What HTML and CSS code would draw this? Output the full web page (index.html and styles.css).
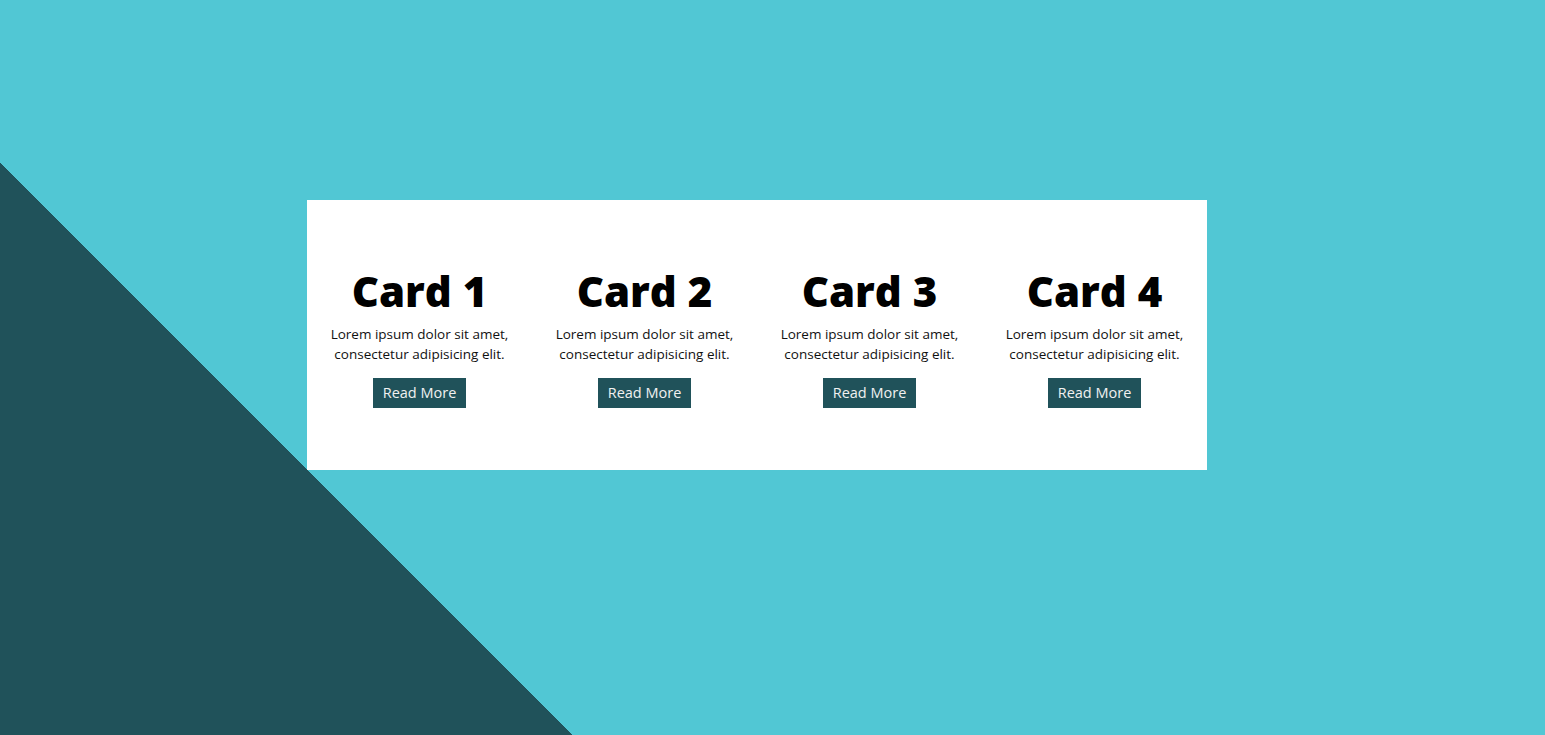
FILE: index.html
```html
<!DOCTYPE html>
<html lang="en">
<head>
<meta charset="utf-8">
<title>Cards</title>
<link rel="stylesheet" href="styles.css">
</head>
<body>
  <main class="stage">
    <section class="cards">
      <article class="card">
        <h2 class="card-title">Card 1</h2>
        <p class="card-text">Lorem ipsum dolor sit amet, consectetur adipisicing elit.</p>
        <a class="card-btn" href="#">Read More</a>
      </article>
      <article class="card">
        <h2 class="card-title">Card 2</h2>
        <p class="card-text">Lorem ipsum dolor sit amet, consectetur adipisicing elit.</p>
        <a class="card-btn" href="#">Read More</a>
      </article>
      <article class="card">
        <h2 class="card-title">Card 3</h2>
        <p class="card-text">Lorem ipsum dolor sit amet, consectetur adipisicing elit.</p>
        <a class="card-btn" href="#">Read More</a>
      </article>
      <article class="card">
        <h2 class="card-title">Card 4</h2>
        <p class="card-text">Lorem ipsum dolor sit amet, consectetur adipisicing elit.</p>
        <a class="card-btn" href="#">Read More</a>
      </article>
    </section>
  </main>
</body>
</html>
```

FILE: styles.css
```css
* {
  box-sizing: border-box;
}

html, body {
  margin: 0;
  height: 100%;
}

body {
  font-family: "Open Sans", "Noto Sans", sans-serif;
  background: linear-gradient(45deg, #20525a 404.5px, #51c7d4 404.5px);
  overflow: hidden;
}

.stage {
  padding: 200px 0 0 307px;
}

.cards {
  width: 900px;
  height: 270px;
  background: #ffffff;
  display: grid;
  grid-template-columns: repeat(4, 1fr);
  align-items: center;
}

.card {
  display: flex;
  flex-direction: column;
  align-items: center;
  text-align: center;
  padding: 0 10px;
}

.card-title {
  margin: 2px 0 0;
  font-size: 42px;
  font-weight: 800;
  line-height: 54px;
  color: #000;
}

.card-text {
  margin: 6px 0 14px;
  font-size: 13.5px;
  line-height: 20px;
  color: #111;
}

.card-btn {
  display: block;
  height: 30px;
  line-height: 30px;
  padding: 0 10px;
  background: #20525a;
  color: #f1f1f1;
  font-size: 14.5px;
  text-decoration: none;
}
```
